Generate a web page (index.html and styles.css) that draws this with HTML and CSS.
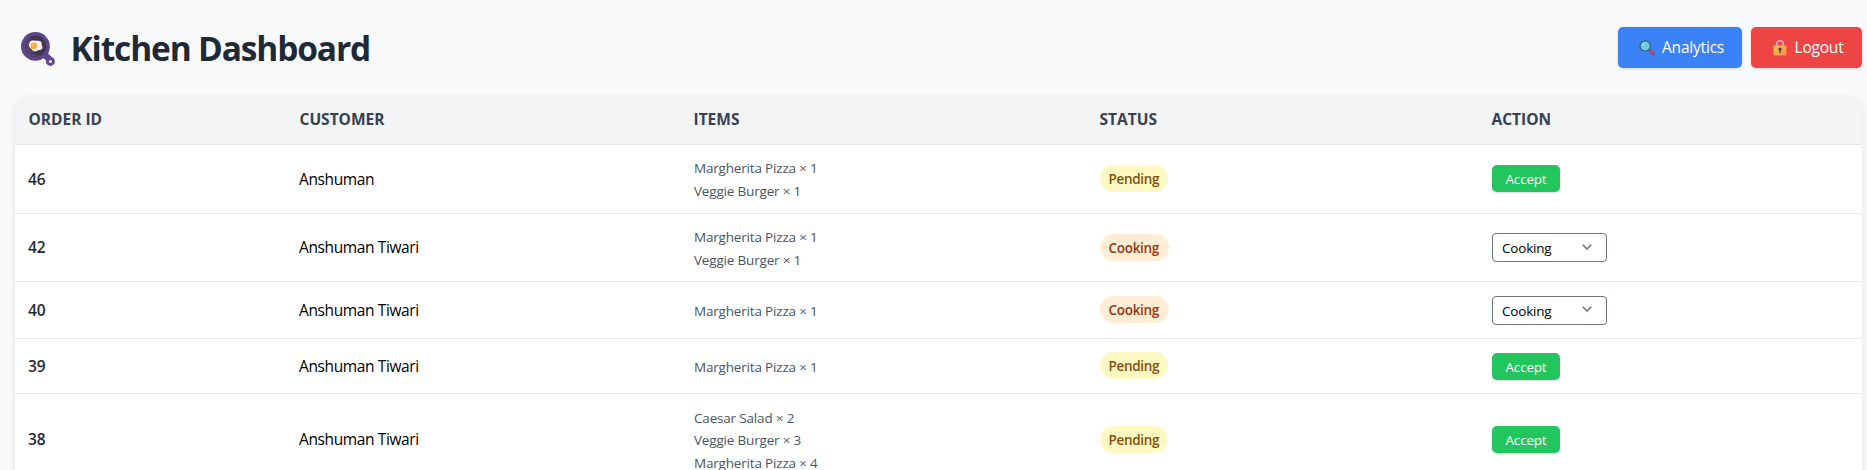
FILE: index.html
```html
<!DOCTYPE html>
<html lang="en">
<head>
<meta charset="utf-8">
<title>Kitchen Dashboard</title>
<link rel="stylesheet" href="styles.css">
</head>
<body>
<header class="topbar">
  <div class="brand">
    <svg class="pan" viewBox="0 0 34 34">
      <path d="M22 21 L29 28" stroke="#5b4488" stroke-width="6.5"/>
      <circle cx="29.4" cy="29.4" r="3" fill="#f9fafb" stroke="#5f478c" stroke-width="3"/>
      <circle cx="14.4" cy="14.4" r="14.4" fill="#5d458a"/>
      <circle cx="14.8" cy="14.2" r="10.6" fill="#43364d"/>
      <path d="M4.200 14.500a10.600 10.600 0 0 0 15 9.300C12 23 9 19 8 13c-.3-3 1-6 3-8.600A10.600 10.600 0 0 0 4.200 14.500Z" fill="#594365"/>
      <path d="M8 13c0-4 2.500-5 5.500-4.500 3 .5 6-.5 7 2 .6 1.500-.2 2.500.8 4 1 2-.8 3.300-3 3.500-2 .2-2.500 2-5 1.500-2.300-.4-2-2-3.500-3C8.500 15.500 8 14.500 8 13Z" fill="#fbf0f8"/>
      <circle cx="12.800" cy="13.800" r="3.300" fill="#f9a92f"/>
      <circle cx="12" cy="13" r="1.500" fill="#fcc45a"/>
    </svg>
    <h1>Kitchen Dashboard</h1>
  </div>
  <nav class="actions">
    <button class="btn analytics">
      <svg class="glass" viewBox="0 0 16 16">
        <path d="M9.500 9.500 12 12" stroke="#3d4d80" stroke-width="1.800"/>
        <path d="m11.500 11 2.800 2.700" stroke="#a04a78" stroke-width="3.600" stroke-linecap="round"/>
        <circle cx="6.200" cy="6" r="5.200" fill="#62d2ea" stroke="#3b5377" stroke-width="1.200"/>
        <path d="M3.200 5.500a3 3 0 0 1 2.500-2.500" fill="none" stroke="#a5ebf5"/>
      </svg>
      <span>Analytics</span>
    </button>
    <button class="btn logout">
      <svg class="lock" viewBox="0 0 14 16">
        <defs><linearGradient id="gold" x2="1" y2="1"><stop stop-color="#fdc34a"/><stop offset="1" stop-color="#f68e45"/></linearGradient></defs>
        <path d="M3.800 6.500V4a3.200 3.200 0 0 1 6.400 0v2.500" fill="none" stroke="#bcaebb" stroke-width="1.700"/>
        <rect x=".5" y="5.500" width="13" height="10" rx="1.200" fill="url(#gold)"/>
        <circle cx="7" cy="9" r="1.600" fill="#51404f"/>
        <path d="M7 9v4" stroke="#51404f" stroke-width="1.500"/>
      </svg>
      <span>Logout</span>
    </button>
  </nav>
</header>
<main class="card">
  <table class="orders">
    <colgroup><col class="c-id"><col class="c-customer"><col class="c-items"><col class="c-status"><col></colgroup>
    <thead>
      <tr><th>ORDER ID</th><th>CUSTOMER</th><th>ITEMS</th><th>STATUS</th><th>ACTION</th></tr>
    </thead>
    <tbody>
      <tr class="r46">
        <td class="id">46</td><td class="customer">Anshuman</td>
        <td><ul><li>Margherita Pizza × 1</li><li>Veggie Burger × 1</li></ul></td>
        <td class="status"><span class="badge pending">Pending</span></td>
        <td><button class="accept">Accept</button></td>
      </tr>
      <tr class="r42">
        <td class="id">42</td><td class="customer">Anshuman Tiwari</td>
        <td><ul><li>Margherita Pizza × 1</li><li>Veggie Burger × 1</li></ul></td>
        <td class="status"><span class="badge cooking">Cooking</span></td>
        <td><div class="select">Cooking<svg viewBox="0 0 10 6"><path d="m.8.8 4.200 4.200L9.200.8"/></svg></div></td>
      </tr>
      <tr class="r40">
        <td class="id">40</td><td class="customer">Anshuman Tiwari</td>
        <td><ul><li>Margherita Pizza × 1</li></ul></td>
        <td class="status"><span class="badge cooking">Cooking</span></td>
        <td><div class="select">Cooking<svg viewBox="0 0 10 6"><path d="m.8.8 4.200 4.200L9.200.8"/></svg></div></td>
      </tr>
      <tr class="r39">
        <td class="id">39</td><td class="customer">Anshuman Tiwari</td>
        <td><ul><li>Margherita Pizza × 1</li></ul></td>
        <td class="status"><span class="badge pending">Pending</span></td>
        <td><button class="accept">Accept</button></td>
      </tr>
      <tr class="r38">
        <td class="id">38</td><td class="customer">Anshuman Tiwari</td>
        <td><ul><li>Caesar Salad × 2</li><li>Veggie Burger × 3</li><li>Margherita Pizza × 4</li></ul></td>
        <td class="status"><span class="badge pending">Pending</span></td>
        <td><button class="accept">Accept</button></td>
      </tr>
    </tbody>
  </table>
</main>
</body>
</html>
```
FILE: styles.css
```css
* { box-sizing: border-box; }
html, body { height: 100%; }
body {
  margin: 0;
  overflow: hidden;
  background: #f9fafb;
  font-family: "Open Sans", "Noto Sans", sans-serif;
  color: #000;
}
.topbar {
  height: 95px;
  padding: 0 5px 0 21px;
  display: flex;
  justify-content: space-between;
}
.brand { display: flex; gap: 15.5px; padding-top: 26px; }
.pan { width: 34px; height: 34px; margin-top: 6px; }
h1 {
  margin: 0;
  font-size: 33.5px;
  line-height: 45px;
  font-weight: 700;
  letter-spacing: -1.15px;
  color: #1f2937;
}
.actions { display: flex; gap: 9px; padding-top: 27px; }
.btn {
  height: 41px;
  display: flex;
  align-items: center;
  border: 0;
  border-radius: 5px;
  color: #fff;
  font: 400 15.5px/22px "Open Sans", sans-serif;
  letter-spacing: -0.2px;
  box-shadow: 0 1px 3px rgba(0, 0, 0, .16);
}
.btn span { white-space: nowrap; padding-bottom: 1px; }
.analytics { width: 124px; padding: 0 0 0 21px; background: #3b82f6; gap: 7px; }
.logout { width: 111px; padding: 0 0 0 21.5px; background: #ef4444; gap: 8px; }
.glass { width: 16px; height: 16px; }
.lock { width: 14px; height: 16px; }
.card {
  margin: 0 5px 0 15px;
  background: #fff;
  border-radius: 13px 13px 0 0;
  overflow: hidden;
  box-shadow: 0 4px 7px rgba(0, 0, 0, .1);
}
.orders { width: 1847px; border-collapse: separate; border-spacing: 0; table-layout: fixed; }
.c-id { width: 271px; }
.c-customer { width: 394px; }
.c-items { width: 406px; }
.c-status { width: 392px; }
th {
  height: 50px;
  padding: 0 14px 1px 13.5px;
  text-align: left;
  font-size: 15.5px;
  line-height: 22px;
  font-weight: 700;
  color: #374151;
  background: #f3f4f6;
  border-bottom: 1px solid #e5e7eb;
}
td { padding: 0 14px; vertical-align: middle; border-bottom: 1px solid #e5e7eb; }
.r46 td { height: 69px; padding-bottom: 1px; }
.r42 td { height: 68px; }
.r40 td { height: 57px; }
.r39 td { height: 55px; }
.r38 td { height: 92px; }
td.status { padding-bottom: 1px; }
td.id { padding-left: 13px; padding-bottom: 1px; font-size: 15.5px; font-weight: 600; color: #1f2937; }
td.customer { padding-left: 13px; padding-bottom: 1px; font-size: 15.5px; letter-spacing: -0.38px; }
ul { margin: 0; padding: 2px 0 0; list-style: none; }
li { font-size: 13.5px; line-height: 22.5px; letter-spacing: -0.18px; color: #4b5563; }
.badge {
  display: block;
  width: 68px;
  height: 27px;
  padding: 2px 0 0 8.5px;
  border-radius: 14px;
  font-size: 13.5px;
  line-height: 25px;
  font-weight: 600;
  letter-spacing: -0.3px;
}
.pending { background: #fef9c3; color: #854d0e; }
.cooking { width: 69px; background: #ffedd5; color: #9a3412; }
.accept {
  display: block;
  width: 68px;
  height: 27px;
  padding: 1px 0 0;
  border: 0;
  border-radius: 5px;
  background: #22c55e;
  color: #fff;
  font: 400 13.5px/24px "Open Sans", sans-serif;
  letter-spacing: -0.2px;
  box-shadow: 0 1px 2px rgba(0, 0, 0, .15);
}
.select {
  width: 115px;
  height: 29px;
  padding: 1px 14px 0 9px;
  display: flex;
  align-items: center;
  justify-content: space-between;
  border: 1px solid #6b7280;
  border-radius: 4px;
  background: #fff;
  font-size: 13.5px;
  line-height: 26px;
  letter-spacing: -0.2px;
}
.select svg { width: 10px; height: 6px; margin-top: -3px; fill: none; stroke: #6b7280; stroke-width: 1.6; }
```
